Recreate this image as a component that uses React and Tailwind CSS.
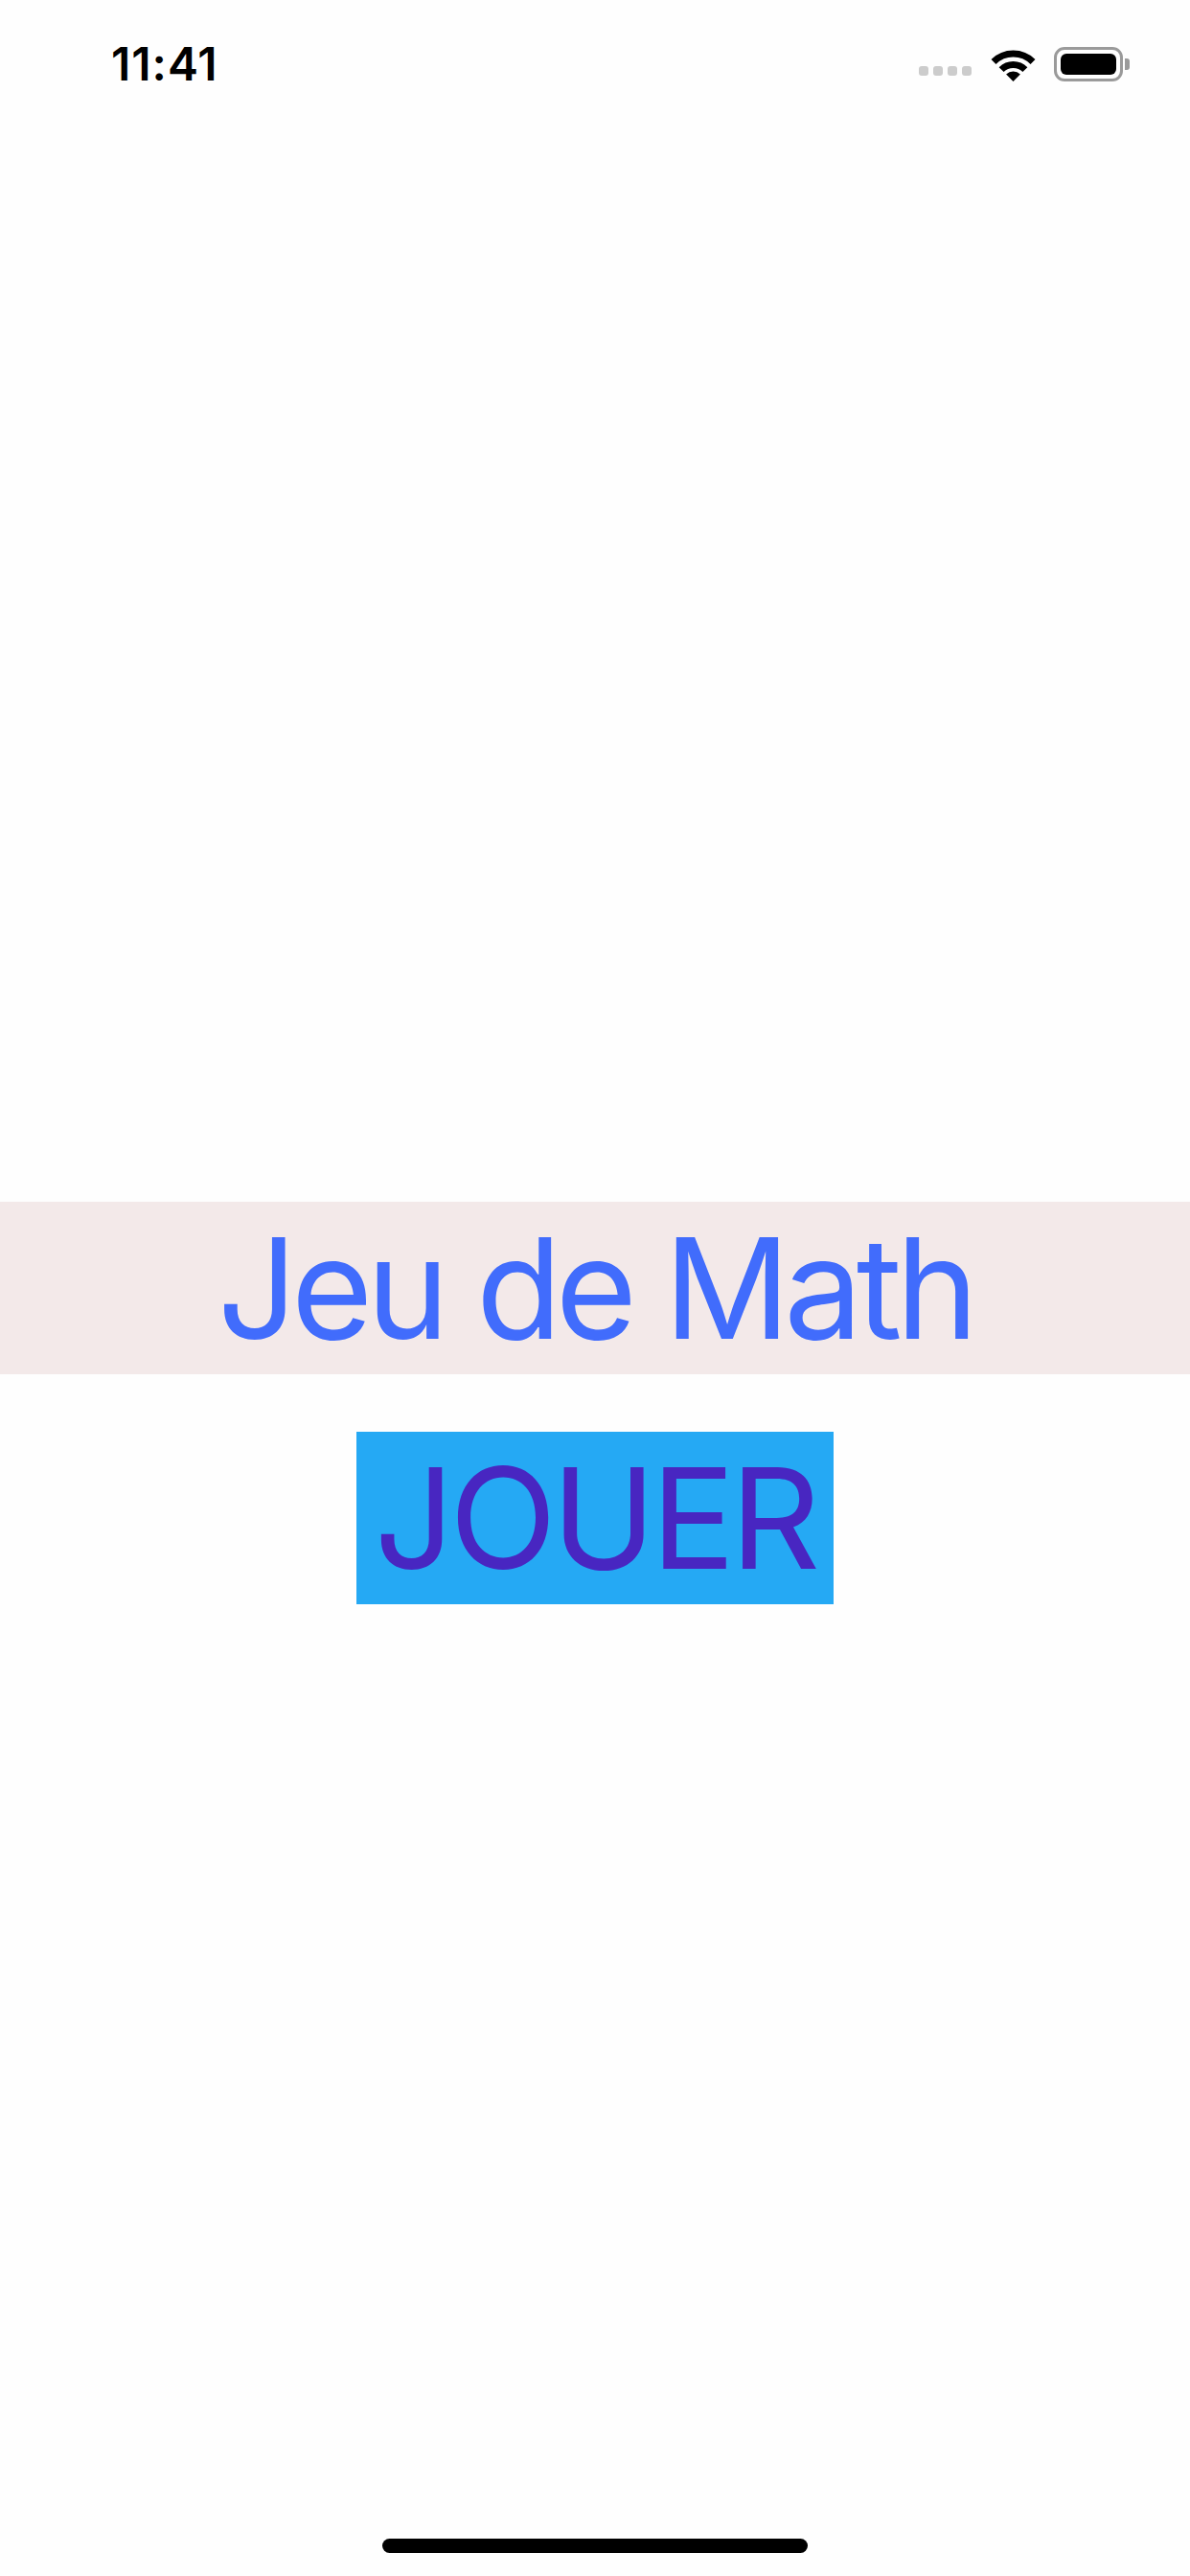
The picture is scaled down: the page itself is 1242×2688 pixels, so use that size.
function WifiIcon() {
  // three bands fanning out from the bottom point
  const cx = 23.5
  const cy = 35
  const arc = (r) => {
    const a = Math.PI / 4
    const x1 = cx - r * Math.sin(a)
    const y1 = cy - r * Math.cos(a)
    const x2 = cx + r * Math.sin(a)
    return `M${x1} ${y1} A${r} ${r} 0 0 1 ${x2} ${y1}`
  }
  return (
    <svg width="47" height="35" viewBox="0 0 47 35">
      <path d={arc(29)} stroke="#000" strokeWidth="7" fill="none" />
      <path d={arc(17.5)} stroke="#000" strokeWidth="7" fill="none" />
      <path d={`M${cx} ${cy} L${cx - 7.4} ${cy - 7.4} A10.5 10.5 0 0 1 ${cx + 7.4} ${cy - 7.4} Z`} fill="#000" />
    </svg>
  )
}

function Battery() {
  return (
    <div className="flex items-center">
      <div className="w-[72px] h-[36px] rounded-[11px] border-[3px] border-[#9a9a9a] p-[4px]">
        <div className="w-full h-full rounded-[6px] bg-black" />
      </div>
      <div className="w-[5px] h-[12px] rounded-r-[3px] bg-[#9a9a9a] ml-[2px]" />
    </div>
  )
}

function StatusBar() {
  return (
    <div className="flex items-center justify-between h-[134px] pl-[116px] pr-[63px]">
      <span className="text-[48px] font-semibold leading-none tracking-[1px] text-black -mt-[1px]">11:41</span>
      <div className="flex items-center">
        <div className="flex items-center gap-[5px] mt-[13px]">
          <span className="w-[10px] h-[10px] rounded-[3px] bg-[#cccccc]" />
          <span className="w-[10px] h-[10px] rounded-[3px] bg-[#cccccc]" />
          <span className="w-[10px] h-[10px] rounded-[3px] bg-[#cccccc]" />
          <span className="w-[10px] h-[10px] rounded-[3px] bg-[#cccccc]" />
        </div>
        <div className="ml-[20px]">
          <WifiIcon />
        </div>
        <div className="ml-[19px]">
          <Battery />
        </div>
      </div>
    </div>
  )
}

export default function App() {
  return (
    <div
      className="h-[2688px] w-[1242px] bg-[#fefefe] flex flex-col overflow-hidden"
      style={{ fontFamily: 'Inter, "Noto Sans", sans-serif' }}
    >
      <StatusBar />

      {/* Title band */}
      <div className="mt-[1120px] h-[180px] bg-[#f3e9e9] flex justify-center">
        <h1 className="text-[146px] leading-[180px] font-normal text-[#416cfc] tracking-[-6.5px]">
          Jeu de Math
        </h1>
      </div>

      {/* Play button */}
      <div className="mt-[60px] flex justify-center">
        <button className="w-[498px] h-[180px] bg-[#25a9f4] text-[146px] leading-[180px] text-[#4826c1] tracking-[-5px]">
          JOUER
        </button>
      </div>

      <div className="flex-1" />

      {/* Home indicator */}
      <div className="flex justify-center pb-[24px]">
        <div className="w-[444px] h-[15px] rounded-full bg-black" />
      </div>
    </div>
  )
}
